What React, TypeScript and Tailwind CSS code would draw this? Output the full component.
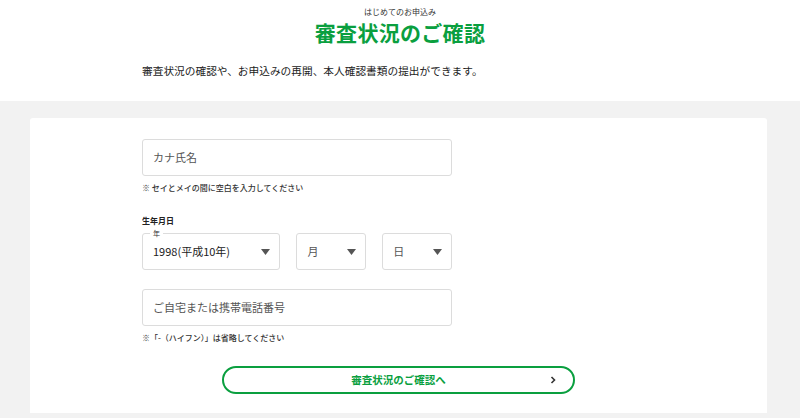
import React from 'react';

const font = { fontFamily: '"Noto Sans CJK JP", "Noto Sans", sans-serif' };

const Caret = () => (
  <svg width="9" height="6" viewBox="0 0 9 6" className="shrink-0">
    <path d="M0 0 H9 L4.5 6 Z" fill="#555" />
  </svg>
);

const SelectBox = ({ label, value, placeholder, className }: { label?: string; value?: string; placeholder?: string; className: string }) => (
  <div className={`relative h-[37px] rounded-[3px] border border-[#dcdcdc] bg-white flex items-center justify-between pl-[10px] pr-[9px] ${className}`}>
    {label && (
      <span className="absolute -top-[6px] left-[7px] bg-white px-[3px] text-[7px] leading-[10px] text-[#333]">{label}</span>
    )}
    <span className={`text-[11px] ${value ? 'text-[#222]' : 'text-[#555]'}`}>{value ?? placeholder}</span>
    <Caret />
  </div>
);

export default function App() {
  return (
    <div style={font} className="w-[800px] h-[418px] overflow-hidden bg-[#f2f2f2]">
      {/* ヘッダー */}
      <div className="bg-white h-[101px] flex flex-col">
        <div className="flex flex-col items-center pt-[7px]">
          <span className="text-[8px] leading-[10px] text-[#333]">はじめてのお申込み</span>
          <h1 className="mt-[3px] text-[21px] leading-[24px] font-bold text-[#0a9f3f] tracking-[0.3px]">審査状況のご確認</h1>
        </div>
        <p className="mt-[20px] pl-[142px] text-[10.7px] leading-[14px] text-[#222]">
          審査状況の確認や、お申込みの再開、本人確認書類の提出ができます。
        </p>
      </div>

      {/* フォーム */}
      <div className="mx-[30px] mt-[17px] h-[295px] w-[737px] rounded-t-[3px] bg-white pt-[21px] pl-[112px]">
        <div className="w-[310px]">
          <div className="h-[37px] rounded-[3px] border border-[#dcdcdc] flex items-center pl-[10px]">
            <span className="text-[11px] text-[#555]">カナ氏名</span>
          </div>
          <p className="mt-[7px] text-[8px] leading-[10px] font-medium text-[#333]">※ セイとメイの間に空白を入力してください</p>

          <p className="mt-[23px] text-[8px] leading-[10px] font-bold text-[#222]">生年月日</p>
          <div className="mt-[7px] flex gap-[16px]">
            <SelectBox label="年" value="1998(平成10年)" className="w-[139px]" />
            <SelectBox placeholder="月" className="w-[70px]" />
            <SelectBox placeholder="日" className="w-[70px]" />
          </div>

          <div className="mt-[19px] h-[37px] rounded-[3px] border border-[#dcdcdc] flex items-center pl-[10px]">
            <span className="text-[11px] text-[#555]">ご自宅または携帯電話番号</span>
          </div>
          <p className="mt-[7px] text-[8px] leading-[10px] font-medium text-[#333]">※「-（ハイフン）」は省略してください</p>
        </div>

        <div className="mt-[23px] ml-[80px] w-[353px] h-[28px] rounded-full border-2 border-[#0a9f3f] flex items-center justify-center relative">
          <span className="text-[10.5px] font-bold text-[#0a9f3f]">審査状況のご確認へ</span>
          <svg width="6" height="8" viewBox="0 0 6 8" className="absolute right-[17px] top-[8px]">
            <path d="M1.5 1 L4.5 4 L1.5 7" fill="none" stroke="#333" strokeWidth="1.6" />
          </svg>
        </div>
      </div>
    </div>
  );
}
